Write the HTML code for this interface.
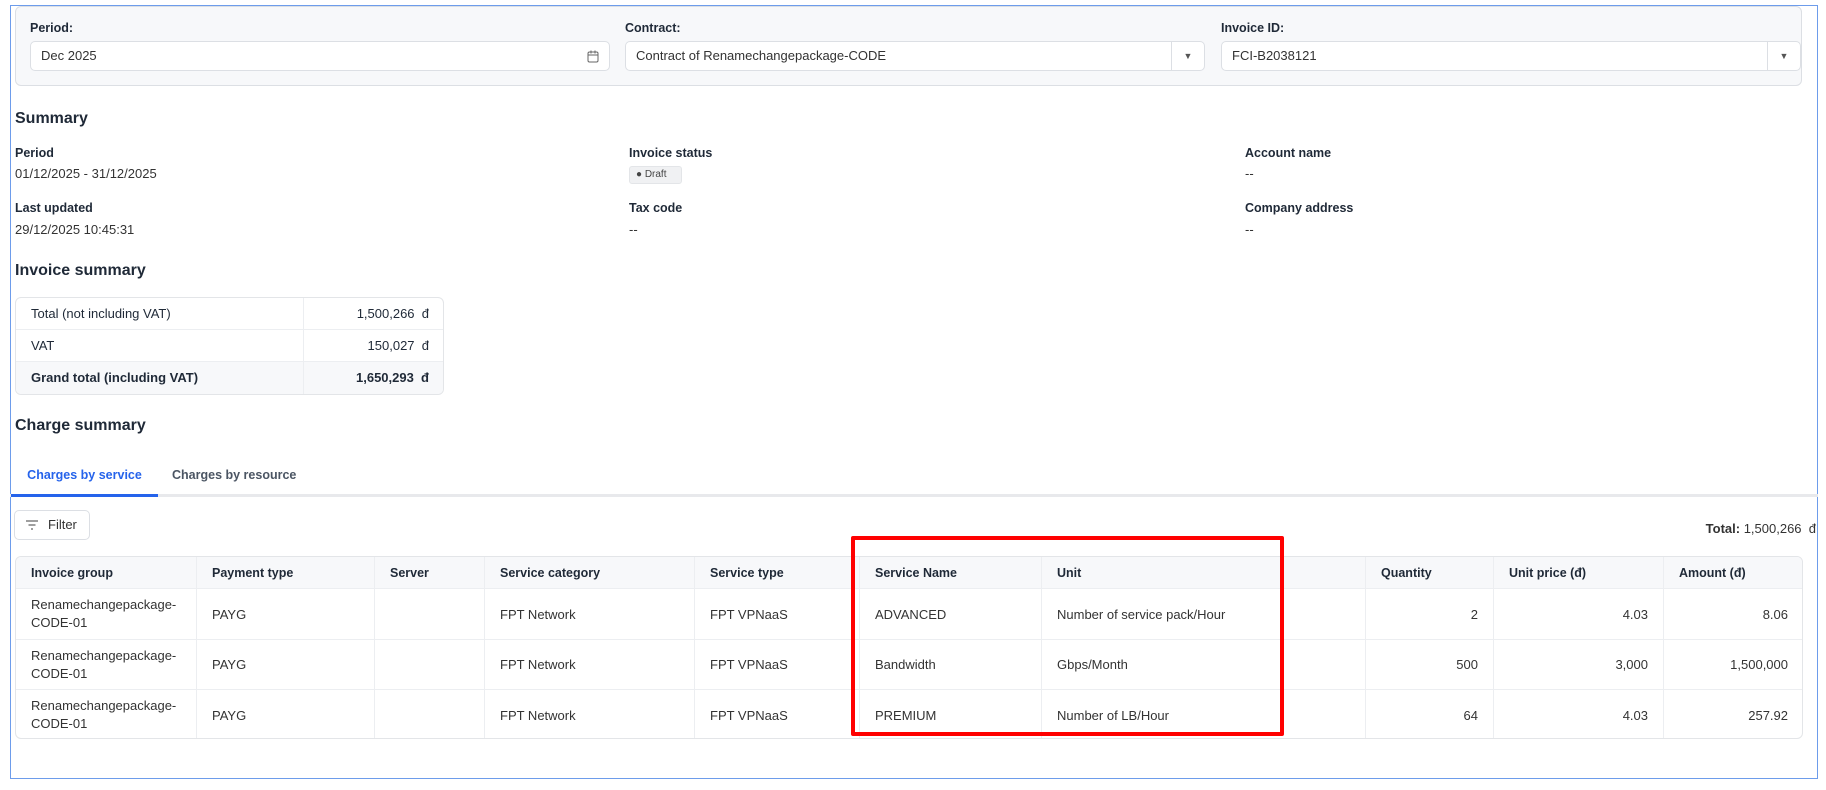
<!DOCTYPE html>
<html><head><meta charset="utf-8"><style>
*{box-sizing:border-box;margin:0;padding:0}
body{width:1826px;height:790px;background:#fff;font-family:"Liberation Sans",sans-serif;font-size:13px;color:#1f2937;position:relative;overflow:hidden}
.abs{position:absolute}
.frame{left:10px;top:5px;width:1808px;height:774px;border:1px solid #6d9ceb}
.card{left:15px;top:6px;width:1787px;height:80px;border:1px solid #dcdfe4;border-radius:6px;background:#f7f8fa}
.lbl{font-weight:bold;font-size:12.5px;color:#1f2937}
.inp{height:30px;border:1px solid #dcdfe4;border-radius:5px;background:#fff;padding:0 10px;line-height:28px;font-size:13px;color:#333}
.dd{position:absolute;right:0;top:0;width:33px;height:28px;border-left:1px solid #dcdfe4;text-align:center;font-size:9px;color:#555;line-height:28px}
h2{position:absolute;font-size:16px;font-weight:bold;color:#1f2937}
.k{position:absolute;font-weight:bold;font-size:12.5px}
.v{position:absolute;font-size:13px;color:#333}
.badge{left:629px;top:166px;width:53px;height:18px;background:#f0f1f3;border:1px solid #e3e5e8;border-radius:3px;font-size:10px;line-height:16px;padding-left:6px;color:#444}
.inv{left:15px;top:297px;width:429px;border:1px solid #e3e5e8;border-radius:6px;overflow:hidden;font-size:13px}
.inv div.r{height:32px;display:flex;border-bottom:1px solid #eceef1;line-height:31px}
.inv div.r:last-child{border-bottom:none;background:#f7f8fa;font-weight:bold}
.inv .a{width:288px;padding-left:15px;border-right:1px solid #eceef1}
.inv .b{flex:1;text-align:right;padding-right:14px}
.tabs{left:10px;top:460px;width:1808px;height:37px;border-bottom:3px solid #e8e9ec}
.tab{position:absolute;top:0;height:37px;line-height:30px;font-size:12.5px;font-weight:bold;color:#4b5563}
.grid{left:15px;top:556px;width:1788px;height:183px;border:1px solid #e3e5e8;border-radius:6px;overflow:hidden}
.row{position:absolute;left:0;width:100%;border-bottom:1px solid #eceef1}
.c{position:absolute;top:0;height:100%;border-left:1px solid #eceef1;padding:0 15px;display:flex;align-items:center;font-size:13px;color:#333}
.hd .c{font-weight:bold;color:#1f2937;font-size:12.5px}
.r{justify-content:flex-end}
</style></head><body>
<div class="abs frame"></div>
<div class="abs card"></div>
<div class="abs lbl" style="left:30px;top:21px">Period:</div>
<div class="abs inp" style="left:30px;top:41px;width:580px">Dec 2025
<svg style="position:absolute;right:10px;top:8px" width="12" height="13" viewBox="0 0 12 13" fill="none" stroke="#666" stroke-width="1"><rect x="1" y="2" width="10" height="10" rx="1.5"/><path d="M1 5h10M4 0.5v3M8 0.5v3"/></svg></div>
<div class="abs lbl" style="left:625px;top:21px">Contract:</div>
<div class="abs inp" style="left:625px;top:41px;width:580px">Contract of Renamechangepackage-CODE<div class="dd">▼</div></div>
<div class="abs lbl" style="left:1221px;top:21px">Invoice ID:</div>
<div class="abs inp" style="left:1221px;top:41px;width:580px">FCI-B2038121<div class="dd">▼</div></div>

<h2 style="left:15px;top:110px">Summary</h2>
<div class="k" style="left:15px;top:146px">Period</div>
<div class="v" style="left:15px;top:166px">01/12/2025 - 31/12/2025</div>
<div class="k" style="left:15px;top:201px">Last updated</div>
<div class="v" style="left:15px;top:222px">29/12/2025 10:45:31</div>
<div class="k" style="left:629px;top:146px">Invoice status</div>
<div class="abs badge">● Draft</div>
<div class="k" style="left:629px;top:201px">Tax code</div>
<div class="v" style="left:629px;top:222px">--</div>
<div class="k" style="left:1245px;top:146px">Account name</div>
<div class="v" style="left:1245px;top:166px">--</div>
<div class="k" style="left:1245px;top:201px">Company address</div>
<div class="v" style="left:1245px;top:222px">--</div>

<h2 style="left:15px;top:262px">Invoice summary</h2>
<div class="abs inv">
<div class="r"><div class="a">Total (not including VAT)</div><div class="b">1,500,266&nbsp; đ</div></div>
<div class="r"><div class="a">VAT</div><div class="b">150,027&nbsp; đ</div></div>
<div class="r"><div class="a">Grand total (including VAT)</div><div class="b">1,650,293&nbsp; đ</div></div>
</div>

<h2 style="left:15px;top:417px">Charge summary</h2>
<div class="abs tabs">
<div class="tab" style="left:1px;width:147px;color:#2563eb;text-align:center;border-bottom:3px solid #2563eb">Charges by service</div>
<div class="tab" style="left:162px">Charges by resource</div>
</div>
<div class="abs" style="left:14px;top:510px;width:76px;height:30px;border:1px solid #dcdfe4;border-radius:5px;line-height:28px;padding-left:33px;font-size:13px;color:#333">Filter
<svg style="position:absolute;left:11px;top:9px" width="12" height="10" viewBox="0 0 12 10" stroke="#666" stroke-width="1.2"><path d="M0 1h12M2.5 5h7M5 9h2"/></svg></div>
<div class="abs" style="right:10px;top:521px;font-size:13px;color:#333;white-space:nowrap"><b>Total:</b> 1,500,266&nbsp; đ</div>

<div class="abs grid">
<div class="row hd" style="top:0;height:32px;background:#f7f8fa">
<div class="c" style="left:0;border:none">Invoice group</div><div class="c" style="left:180px">Payment type</div><div class="c" style="left:358px">Server</div><div class="c" style="left:468px">Service category</div><div class="c" style="left:678px">Service type</div><div class="c" style="left:843px">Service Name</div><div class="c" style="left:1025px">Unit</div><div class="c" style="left:1349px">Quantity</div><div class="c" style="left:1477px">Unit price (đ)</div><div class="c" style="left:1647px">Amount (đ)</div>
</div>
<div class="row" style="top:32px;height:51px">
<div class="c" style="left:0;border:none;line-height:18px">Renamechangepackage-<br>CODE-01</div><div class="c" style="left:180px">PAYG</div><div class="c" style="left:358px"></div><div class="c" style="left:468px">FPT Network</div><div class="c" style="left:678px">FPT VPNaaS</div><div class="c" style="left:843px">ADVANCED</div><div class="c" style="left:1025px">Number of service pack/Hour</div><div class="c r" style="left:1349px;width:128px">2</div><div class="c r" style="left:1477px;width:170px">4.03</div><div class="c r" style="left:1647px;width:141px;padding-right:16px">8.06</div>
</div>
<div class="row" style="top:83px;height:50px">
<div class="c" style="left:0;border:none;line-height:18px">Renamechangepackage-<br>CODE-01</div><div class="c" style="left:180px">PAYG</div><div class="c" style="left:358px"></div><div class="c" style="left:468px">FPT Network</div><div class="c" style="left:678px">FPT VPNaaS</div><div class="c" style="left:843px">Bandwidth</div><div class="c" style="left:1025px">Gbps/Month</div><div class="c r" style="left:1349px;width:128px">500</div><div class="c r" style="left:1477px;width:170px">3,000</div><div class="c r" style="left:1647px;width:141px;padding-right:16px">1,500,000</div>
</div>
<div class="row" style="top:133px;height:50px;border:none">
<div class="c" style="left:0;border:none;line-height:18px">Renamechangepackage-<br>CODE-01</div><div class="c" style="left:180px">PAYG</div><div class="c" style="left:358px"></div><div class="c" style="left:468px">FPT Network</div><div class="c" style="left:678px">FPT VPNaaS</div><div class="c" style="left:843px">PREMIUM</div><div class="c" style="left:1025px">Number of LB/Hour</div><div class="c r" style="left:1349px;width:128px">64</div><div class="c r" style="left:1477px;width:170px">4.03</div><div class="c r" style="left:1647px;width:141px;padding-right:16px">257.92</div>
</div>
</div>
<div class="abs" style="left:851px;top:536px;width:433px;height:200px;border:4px solid #ff0000;border-radius:2px"></div>
</body></html>
